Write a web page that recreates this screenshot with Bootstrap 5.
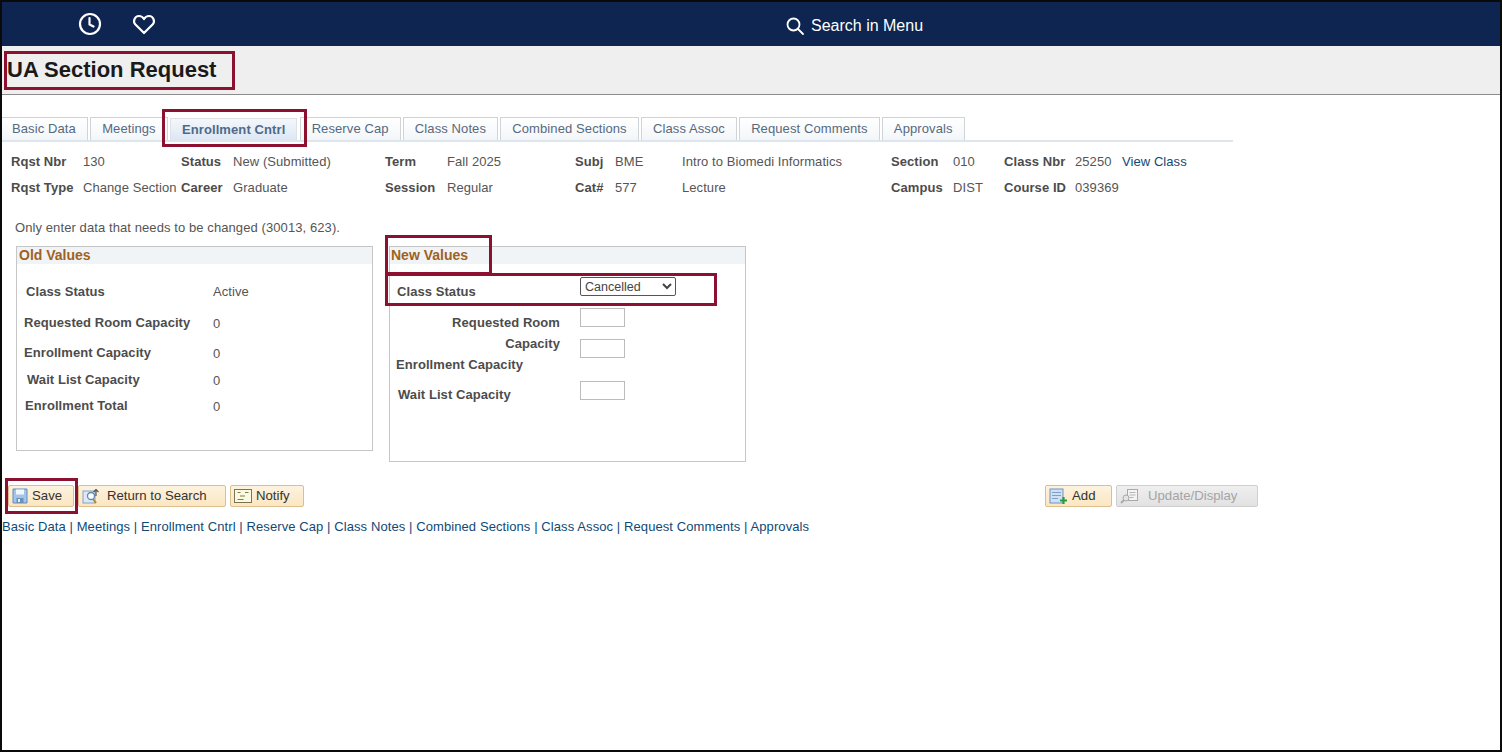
<!DOCTYPE html>
<html>
  <head>
    <meta charset="utf-8" />
    <meta name="viewport" content="width=device-width" />
    <title>UA Section Request</title>
    <link href="https://cdn.jsdelivr.net/npm/bootstrap@5.3.3/dist/css/bootstrap.min.css" rel="stylesheet" />
    <style>
      html, body { height: 100%; margin: 0; overflow: hidden; }
      body { font-family: "Liberation Sans", Arial, sans-serif; font-size: 13px; letter-spacing: .07px; color: #555; background: #fff; }
      .frame { position: relative; height: 752px; border: 2px solid #0a0a0a; }
      .topbar { height: 44px; background: #0d2550; color: #fff; }
      .top-icons { padding-left: 76px; gap: 30px; width: 784px; }
      .search-menu { font-size: 16px; gap: 7px; padding-top: 3px; letter-spacing: 0; }
      .titlebar { height: 49px; background: #efefef; border-bottom: 1px solid #8c8c8c; padding-left: 5px; }
      .titlebar h1 { font-size: 22px; font-weight: 700; color: #1a1a1a; margin: 0; letter-spacing: 0; }
      .tabs-wrap { width: 1231px; margin-top: 22px; }
      .nav-tabs.ps-tabs { gap: 2.25px; border-bottom: 2px solid #dde6ef; }
      .ps-tabs .nav-link { height: 23px; margin: 0; padding: 0 11px; line-height: 22px; font-size: 13px; letter-spacing: .1px; color: #56697f; border: 1px solid #cfd4d8; border-bottom: 0; border-radius: 0; background: linear-gradient(#fff, #f3f6f9); }
      .ps-tabs .nav-item:first-child .nav-link { padding-left: 10px; border-left: 0; }
      .ps-tabs .nav-link.active { margin-top: 1px; height: 22px; font-weight: 700; color: #4f6a88; background: linear-gradient(#f4f7fb, #dce7f4); }
      .info-grid { display: grid; grid-template-columns: 72px 98px 52px 152px 62px 128px 40px 67px 209px 62px 51px 71px 47px auto; row-gap: 11px; padding: 12px 0 0 9px; line-height: 15px; }
      .info-grid b, .ps-label { font-weight: 700; color: #4c4c4c; }
      .info-grid a, .link-row a { color: #0f4a75; text-decoration: none; }
      .note { margin: 25px 0 0 13px; line-height: 15px; letter-spacing: .09px; }
      .panels { margin: 11px 0 0 14px; gap: 16px; align-items: flex-start; }
      .panel { width: 357px; border: 1px solid #c6c6c6; }
      .panel-old { height: 205px; }
      .panel-new { height: 216px; }
      .panel-head { height: 17px; line-height: 17px; background: #f0f4f6; color: #a0611f; font-size: 14px; font-weight: 700; padding-left: 2px; letter-spacing: 0; }
      .panel-new .panel-head { padding-left: 1px; }
      .old-row { display: flex; line-height: 15px; }
      .old-row .ps-label { width: 187px; }
      .old-row .ps-value { padding-top: 1px; }
      .or1 { margin-top: 20px; padding-left: 9px; }
      .or2 { margin-top: 16px; padding-left: 7px; }
      .or3 { margin-top: 14px; padding-left: 7px; }
      .or4 { margin-top: 11px; padding-left: 10px; }
      .or5 { margin-top: 10px; padding-left: 8px; }
      .or2 .ps-label, .or3 .ps-label { width: 189px; }
      .or5 .ps-label { width: 188px; }
      .or4 .ps-label { width: 186px; }
      .new-body { gap: 19px; }
      .new-labels { width: 171px; line-height: 15px; }
      .new-labels .l1 { margin: 20px 0 0 7px; }
      .new-labels .l2 { margin-top: 13px; padding-right: 1px; text-align: right; line-height: 21px; }
      .new-labels .l3 { margin: 3px 0 0 6px; }
      .new-labels .l4 { margin: 15px 0 0 8px; }
      .new-fields { padding-top: 13px; }
      .ps-select { display: block; width: 96px; height: 19px; padding: 0; font: 12.5px "Liberation Sans", Arial, sans-serif; color: #444; background: #fff; border: 1px solid #555; border-radius: 2px; }
      .ps-input { display: block; width: 45px; height: 19px; padding: 0; border: 1px solid #bcbcbc; border-radius: 0; }
      .i1 { margin-top: 12px; }
      .i2 { margin-top: 12px; }
      .i3 { margin-top: 23px; }
      .actions { width: 1256px; margin-top: 23px; padding-left: 6px; }
      .ps-btn { display: inline-flex; align-items: center; gap: 4px; height: 22px; padding: 0 0 0 3px; font-size: 13.2px; letter-spacing: 0; color: #333; border: 1px solid #dcbf8c; border-radius: 2px; background: linear-gradient(#fdf3df, #fbe6c2); }
      .ps-btn.disabled-btn { color: #a4a4a4; border-color: #cfcfcf; background: linear-gradient(#efefef, #e2e2e2); }
      .btn-save { width: 66px; }
      .btn-return { width: 148px; }
      .btn-notify { width: 74px; }
      .btn-add { width: 67px; }
      .btn-update { width: 142px; }
      .link-row { margin-top: 12px; line-height: 16px; color: #0f4a75; font-size: 13px; letter-spacing: .09px; }
      .callout-box { position: absolute; border: 3px solid #8c1130; pointer-events: none; }
      .c-title { left: 2px; top: 49px; width: 231px; height: 39px; }
      .c-tab { left: 160px; top: 107px; width: 145px; height: 38px; }
      .c-new { left: 383px; top: 233px; width: 107px; height: 40px; }
      .c-status { left: 383px; top: 271px; width: 332px; height: 33px; }
      .c-save { left: 3px; top: 476px; width: 73px; height: 36px; }
    </style>
  </head>

  <body>
    <div class="frame">
      <header class="topbar d-flex align-items-center">
        <div class="top-icons d-flex align-items-center">
          <svg width="24" height="24" viewBox="0 0 24 24" fill="none" stroke="#fff" stroke-width="2.2" stroke-linecap="round" stroke-linejoin="round"><circle cx="12" cy="12" r="10"/><path d="M11.5 6v6.5l4 2"/></svg>
          <svg width="24" height="22" viewBox="0 0 24 22" fill="none" stroke="#fff" stroke-width="2.2" stroke-linejoin="round"><path d="M12 20 3.2 11.2C.8 8.600 2.400 3 7 3c2.300 0 4 1.300 5 3 1-1.700 2.700-3 5-3 4.600 0 6.200 5.600 3.800 8.200z"/></svg>
        </div>
        <div class="search-menu d-flex align-items-center">
          <svg width="18" height="18" viewBox="0 0 18 18" fill="none" stroke="#fff" stroke-width="1.8" stroke-linecap="round"><circle cx="7.500" cy="7.500" r="6"/><path d="m12 12 5 5"/></svg>
          <span>Search in Menu</span>
        </div>
      </header>

      <div class="titlebar d-flex align-items-center">
        <h1>UA Section Request</h1>
      </div>

      <div class="tabs-wrap">
        <ul class="nav nav-tabs ps-tabs">
          <li class="nav-item"><a class="nav-link" href="#">Basic Data</a></li>
          <li class="nav-item"><a class="nav-link" href="#">Meetings</a></li>
          <li class="nav-item"><a class="nav-link active" href="#">Enrollment Cntrl</a></li>
          <li class="nav-item"><a class="nav-link" href="#">Reserve Cap</a></li>
          <li class="nav-item"><a class="nav-link" href="#">Class Notes</a></li>
          <li class="nav-item"><a class="nav-link" href="#">Combined Sections</a></li>
          <li class="nav-item"><a class="nav-link" href="#">Class Assoc</a></li>
          <li class="nav-item"><a class="nav-link" href="#">Request Comments</a></li>
          <li class="nav-item"><a class="nav-link" href="#">Approvals</a></li>
        </ul>
      </div>

      <div class="info-grid">
        <b>Rqst Nbr</b><span>130</span><b>Status</b><span>New (Submitted)</span><b>Term</b><span>Fall 2025</span><b>Subj</b><span>BME</span><span>Intro to Biomedi Informatics</span><b>Section</b><span>010</span><b>Class Nbr</b><span>25250</span><a href="#">View Class</a>
        <b>Rqst Type</b><span>Change Section</span><b>Career</b><span>Graduate</span><b>Session</b><span>Regular</span><b>Cat#</b><span>577</span><span>Lecture</span><b>Campus</b><span>DIST</span><b>Course ID</b><span>039369</span><span></span>
      </div>

      <p class="note mb-0">Only enter data that needs to be changed (30013, 623).</p>

      <div class="panels d-flex">
        <section class="panel panel-old">
          <div class="panel-head">Old Values</div>
          <div class="old-row or1"><span class="ps-label">Class Status</span><span>Active</span></div>
          <div class="old-row or2"><span class="ps-label">Requested Room Capacity</span><span class="ps-value">0</span></div>
          <div class="old-row or3"><span class="ps-label">Enrollment Capacity</span><span class="ps-value">0</span></div>
          <div class="old-row or4"><span class="ps-label">Wait List Capacity</span><span class="ps-value">0</span></div>
          <div class="old-row or5"><span class="ps-label">Enrollment Total</span><span class="ps-value">0</span></div>
        </section>

        <section class="panel panel-new">
          <div class="panel-head">New Values</div>
          <div class="new-body d-flex">
            <div class="new-labels">
              <div class="ps-label l1">Class Status</div>
              <div class="ps-label l2">Requested Room<br />Capacity</div>
              <div class="ps-label l3">Enrollment Capacity</div>
              <div class="ps-label l4">Wait List Capacity</div>
            </div>
            <div class="new-fields">
              <select class="ps-select"><option>Cancelled</option></select>
              <input class="ps-input i1" type="text" />
              <input class="ps-input i2" type="text" />
              <input class="ps-input i3" type="text" />
            </div>
          </div>
        </section>
      </div>

      <div class="actions d-flex justify-content-between">
        <div class="d-flex gap-1">
          <button type="button" class="ps-btn btn-save">
            <svg width="16" height="16" viewBox="0 0 16 16"><path d="M1 1h14v14H1z" fill="#a3c5ea" stroke="#5f8fc0"/><path d="M4 1.500h8v5H4z" fill="#f2f7fc"/><path d="M4.500 10h7v5h-7z" fill="#6d90b8"/><path d="M6 11h2v3H6z" fill="#e6eef6"/></svg>
            Save
          </button>
          <button type="button" class="ps-btn btn-return">
            <svg width="21" height="17" viewBox="0 0 21 17" fill="none"><rect x="1" y="3" width="12" height="12" fill="#dce8f5" stroke="#7fa3c9"/><circle cx="9" cy="8" r="3.500" fill="#fff" stroke="#5f86ad" stroke-width="1.300"/><path d="m11 11 3 4" stroke="#b98a2c" stroke-width="2"/><path d="M14 8V2M11.500 4 14 1.500 16.500 4" stroke="#555" stroke-width="1.200"/></svg>
            <span>Return to Search</span>
          </button>
          <button type="button" class="ps-btn btn-notify">
            <svg width="18" height="14" viewBox="0 0 18 14"><rect x=".5" y=".5" width="17" height="13" fill="#fdf8e4" stroke="#7c7450"/><path d="M3.500 3.500h3M11 3.500h3.500M6 7h5M3.500 10.500h6" stroke="#6d8a3a" stroke-width="1.200"/></svg>
            Notify
          </button>
        </div>
        <div class="d-flex gap-1">
          <button type="button" class="ps-btn btn-add">
            <svg width="19" height="17" viewBox="0 0 19 17"><rect x="1" y="1" width="13" height="14" fill="#cfe0f3" stroke="#6f94c4"/><path d="M3 4.500h9M3 7.500h9M3 10.500h6" stroke="#7ca0cc"/><path d="M14.500 9v7M11 12.500h7" stroke="#2f9a45" stroke-width="2.200"/></svg>
            <span>Add</span>
          </button>
          <button type="button" class="ps-btn btn-update disabled-btn">
            <svg width="20" height="17" viewBox="0 0 20 17" fill="none"><rect x="7.500" y="1.500" width="10" height="11" fill="#f4f4f4" stroke="#a9a9a9"/><path d="M9.500 4.500h6M9.500 7h6M9.500 9.500h4" stroke="#b5b5b5"/><circle cx="6" cy="10" r="3" fill="#e4e4e4" stroke="#a9a9a9"/><path d="m4 12-3 3" stroke="#a9a9a9" stroke-width="1.800"/></svg>
            <span class="ms-1">Update/Display</span>
          </button>
        </div>
      </div>

      <div class="link-row">
        <a href="#">Basic Data</a> | <a href="#">Meetings</a> | <a href="#">Enrollment Cntrl</a> | <a href="#">Reserve Cap</a> | <a href="#">Class Notes</a> | <a href="#">Combined Sections</a> | <a href="#">Class Assoc</a> | <a href="#">Request Comments</a> | <a href="#">Approvals</a>
      </div>

      <div class="callout-box c-title"></div>
      <div class="callout-box c-tab"></div>
      <div class="callout-box c-new"></div>
      <div class="callout-box c-status"></div>
      <div class="callout-box c-save"></div>
    </div>

    <script src="https://cdn.jsdelivr.net/npm/bootstrap@5.3.3/dist/js/bootstrap.bundle.min.js"></script>
  </body>
</html>
